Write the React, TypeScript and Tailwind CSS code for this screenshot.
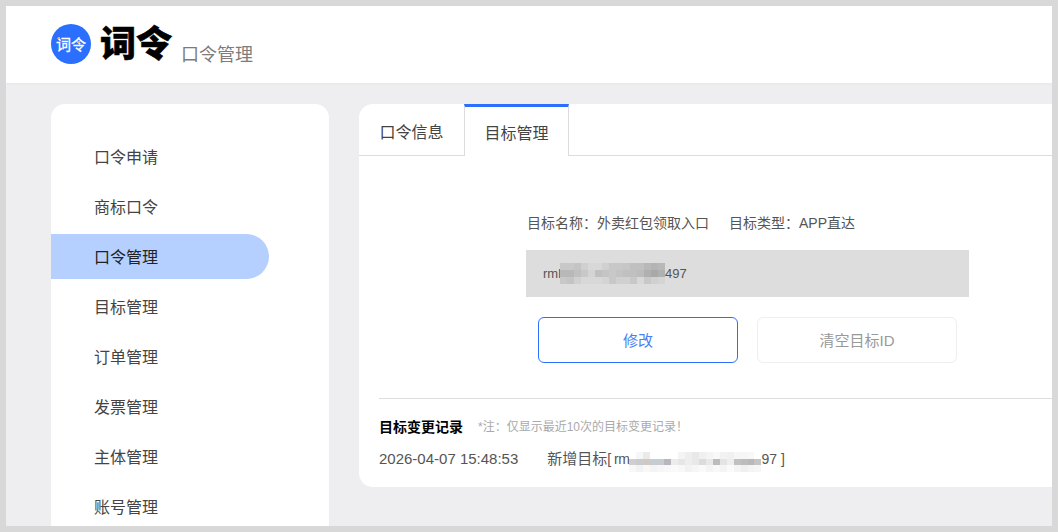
const menu = ["口令申请", "商标口令", "口令管理", "目标管理", "订单管理", "发票管理", "主体管理", "账号管理"];

// mosaic left by the screenshot's privacy blur
const blurTarget = [
  "#c8c8c8 #c8c8c8 #c4c4c4 #d0d0d0 #d8d8d8 #d8d8d8 #d0d0d0 #c8c8c8 #c8c8c8 #c6c6c6 #c0c0c0 #c0c0c0 #b8b8b8 #b4b4b4 #b8b8b8",
  "#b8b8b8 #b8b8b8 #c0c0c0 #c8c8c8 #d4d4d4 #c0c0c0 #c4c4c4 #c8c8c8 #c4c4c4 #c0c0c0 #c0c0c0 #bcbcbc #b0b0b0 #a8a8a8 #b0b0b0",
  "#c8c8c8 #c4c4c4 #d0d0d0 #d8d8d8 #d8d8d8 #d8d8d8 #d4d4d4 #c8c8c8 #d0d0d0 #d0d0d0 #c8c8c8 #d8d8d8 #c8c8c8 #d0d0d0 #d4d4d4",
];
const blurLog = [
  "#ffffff #f6f6f6 #eaeaea #ffffff #ffffff #ffffff #ffffff #f4f4f4 #eeeeee #e8e8e8 #f0f0f0 #f4f4f4 #f8f8f8 #f2f2f2 #f0f0f0 #f6f6f6 #f6f6f6 #f8f8f8 #ffffff",
  "#cfcfd2 #c8ccd0 #d2c8c0 #c4ccd4 #c8ccd0 #b8b8bc #ececec #e6e6e6 #eeeeee #e8e8e8 #dcdcdc #e8e8e8 #bcbcbc #e4e4e4 #eeeeee #c0c0c0 #bcbcbc #b8b8b8 #c4c4c4",
  "#f8f8f8 #f2f2f2 #f8f8f8 #f4f4f4 #f6f6f6 #f8f8f8 #fafafa #f8f8f8 #f2f2f2 #f6f6f6 #fafafa #f4f4f4 #f8f8f8 #f4f4f4 #fafafa #f4f4f4 #f0f0f0 #f4f4f4 #f6f6f6",
];

function Mosaic({ rows, cell }: { rows: string[]; cell: string }) {
  return (
    <span className={`inline-grid blur-[0.7px] ${cell}`}>
      {rows.flatMap((r, i) =>
        r.split(" ").map((c, j) => <span key={`${i}-${j}`} style={{ backgroundColor: c }} />)
      )}
    </span>
  );
}

export default function App() {
  return (
    <div className="h-[532px] w-[1058px] overflow-hidden border-[6px] border-[#d8d8d8] bg-[#eeeef0] font-['Liberation_Sans','Noto_Sans_CJK_SC',sans-serif]">
      <header className="flex h-[77px] items-start bg-white pl-[45px] shadow-[0_1px_3px_rgba(0,0,0,0.03)]">
        <div className="relative mt-[18px] flex h-10 w-10 items-center justify-center rounded-full bg-[#2b6fff]">
          <span className="text-[15px] leading-none text-white [-webkit-text-stroke:0.3px_white]">词令</span>
          <span className="absolute top-[13px] left-[7px] h-[2px] w-[2px] bg-[#f5b04a]" />
          <span className="absolute top-[17px] left-[27px] h-[2px] w-[2px] bg-[#f5b04a]" />
        </div>
        <span className="mt-[12px] ml-[9px] text-[36px] leading-[54px] font-black text-black [-webkit-text-stroke:0.6px_black]">词令</span>
        <span className="mt-[36px] ml-[9px] text-[18px] leading-[26px] text-[#7c7c7c]">口令管理</span>
      </header>

      <div className="flex h-[443px] items-start gap-[30px] overflow-hidden pt-[21px] pl-[45px]">
        <aside className="h-[460px] w-[278px] shrink-0 rounded-t-[14px] bg-white pt-[30px]">
          {menu.map((item) => (
            <div
              key={item}
              className={`mb-[5px] flex h-[45px] w-[218px] items-center pt-[3px] pl-[43px] text-[16px] ${
                item === "口令管理" ? "rounded-r-[23px] bg-[#b5d0ff] text-[#222222]" : "text-[#444444]"
              }`}
            >
              {item}
            </div>
          ))}
        </aside>

        <main className="h-[383px] w-[700px] shrink-0 rounded-l-[14px] bg-white">
          <div className="flex h-[52px] border-b border-[#dcdcdc]">
            <div className="flex w-[105px] items-center justify-center pt-[7px] text-[16px] text-[#444444]">口令信息</div>
            <div className="z-10 flex h-[52px] w-[105px] items-center justify-center border-x border-t-[3px] border-x-[#dcdcdc] border-t-[#2b6fff] bg-white pt-[5px] text-[16px] text-[#444444]">
              目标管理
            </div>
          </div>

          <div className="pt-[57px] pl-[167px]">
            <div className="flex h-[20px] items-center gap-[20px] pl-px text-[14px] text-[#555555]">
              <span>目标名称：外卖红包领取入口</span>
              <span>目标类型：APP直达</span>
            </div>
            <div className="mt-[17px] flex h-[47px] w-[443px] items-center bg-[#dddddd] pl-[17px] text-[13px] text-[#555555]">
              rml
              <Mosaic rows={blurTarget} cell="-ml-[1px] h-[21px] w-[105px] grid-cols-[repeat(15,1fr)] grid-rows-3" />
              497
            </div>
            <div className="mt-[20px] flex gap-[19px] pl-[12px]">
              <button className="h-[46px] w-[200px] rounded-[6px] border border-[#2b6fff] bg-white pt-[2px] text-[15px] text-[#4a7ff5]">修改</button>
              <button className="h-[46px] w-[200px] rounded-[6px] border border-[#eeeeee] bg-white pt-[2px] text-[15px] text-[#999999]">清空目标ID</button>
            </div>
          </div>

          <div className="mt-[35px] ml-[20px] border-t border-[#dddddd] pt-[18px]">
            <div className="flex h-[20px] items-center">
              <span className="text-[14px] font-bold text-black">目标变更记录</span>
              <span className="ml-[15px] text-[12px] text-[#aaaaaa]">*注：仅显示最近10次的目标变更记录！</span>
            </div>
            <div className="mt-[12px] flex h-[20px] items-center text-[15px] text-[#555555]">
              <span>2026-04-07 15:48:53</span>
              <span className="ml-[29px]">新增目标</span>
              <span className="text-[14px] tracking-[-0.5px]">[ rm</span>
              <Mosaic rows={blurLog} cell="mt-[6px] h-[20px] w-[132px] grid-cols-[repeat(19,1fr)] grid-rows-3" />
              <span className="text-[14px]">97 ]</span>
            </div>
          </div>
        </main>
      </div>
    </div>
  );
}
